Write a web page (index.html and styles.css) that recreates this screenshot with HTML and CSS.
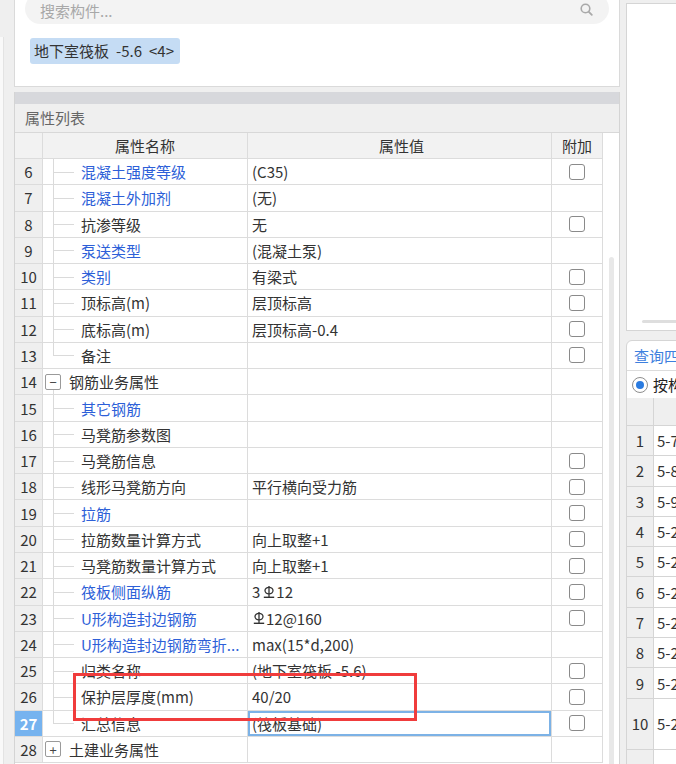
FILE: index.html
```html
<!DOCTYPE html>
<html lang="zh">
<head>
<meta charset="utf-8">
<title>属性列表</title>
<link rel="stylesheet" href="styles.css">
</head>
<body>
<div class="screen">
  <div class="edge"><div class="edge-line"></div></div>

  <div class="left">
    <div class="card">
      <div class="search">
        <span class="ph">搜索构件...</span>
        <svg class="sicon" width="13" height="13" viewBox="0 0 13 13"><circle cx="5.5" cy="5.5" r="4.3" fill="none" stroke="#a9a9a9" stroke-width="1.6"/><line x1="8.6" y1="8.6" x2="11.8" y2="11.8" stroke="#a9a9a9" stroke-width="1.8" stroke-linecap="round"/></svg>
      </div>
      <div class="tags"><span class="tag">地下室筏板<span class="sp"></span>-5.6<span class="sp"></span>&lt;4&gt;</span></div>
    </div>

    <div class="props">
      <div class="titlebar"></div>
      <div class="ptitle">属性列表</div>
      <div class="grid-wrap">
        <div class="table">
          <div class="row head">
            <div class="c num"></div>
            <div class="c name hc">属性名称</div>
            <div class="c val hc">属性值</div>
            <div class="c add hc">附加</div>
          </div>

          <div class="row"><div class="c num">6</div><div class="c name"><span class="tw"></span><span class="lbl link">混凝土强度等级</span></div><div class="c val">(C35)</div><div class="c add"><span class="cb"></span></div></div>
          <div class="row"><div class="c num">7</div><div class="c name"><span class="tw"></span><span class="lbl link">混凝土外加剂</span></div><div class="c val">(无)</div><div class="c add"></div></div>
          <div class="row"><div class="c num">8</div><div class="c name"><span class="tw"></span><span class="lbl">抗渗等级</span></div><div class="c val">无</div><div class="c add"><span class="cb"></span></div></div>
          <div class="row"><div class="c num">9</div><div class="c name"><span class="tw"></span><span class="lbl link">泵送类型</span></div><div class="c val">(混凝土泵)</div><div class="c add"></div></div>
          <div class="row"><div class="c num">10</div><div class="c name"><span class="tw"></span><span class="lbl link">类别</span></div><div class="c val">有梁式</div><div class="c add"><span class="cb"></span></div></div>
          <div class="row"><div class="c num">11</div><div class="c name"><span class="tw"></span><span class="lbl">顶标高(m)</span></div><div class="c val">层顶标高</div><div class="c add"><span class="cb"></span></div></div>
          <div class="row"><div class="c num">12</div><div class="c name"><span class="tw"></span><span class="lbl">底标高(m)</span></div><div class="c val">层顶标高-0.4</div><div class="c add"><span class="cb"></span></div></div>
          <div class="row"><div class="c num">13</div><div class="c name"><span class="tw last"></span><span class="lbl">备注</span></div><div class="c val"></div><div class="c add"><span class="cb"></span></div></div>
          <div class="row"><div class="c num">14</div><div class="c name grp open"><span class="box">−</span><span class="lbl">钢筋业务属性</span></div><div class="c val"></div><div class="c add"></div></div>
          <div class="row"><div class="c num">15</div><div class="c name"><span class="tw"></span><span class="lbl link">其它钢筋</span></div><div class="c val"></div><div class="c add"></div></div>
          <div class="row"><div class="c num">16</div><div class="c name"><span class="tw"></span><span class="lbl">马凳筋参数图</span></div><div class="c val"></div><div class="c add"></div></div>
          <div class="row"><div class="c num">17</div><div class="c name"><span class="tw"></span><span class="lbl">马凳筋信息</span></div><div class="c val"></div><div class="c add"><span class="cb"></span></div></div>
          <div class="row"><div class="c num">18</div><div class="c name"><span class="tw"></span><span class="lbl">线形马凳筋方向</span></div><div class="c val">平行横向受力筋</div><div class="c add"><span class="cb"></span></div></div>
          <div class="row"><div class="c num">19</div><div class="c name"><span class="tw"></span><span class="lbl link">拉筋</span></div><div class="c val"></div><div class="c add"><span class="cb"></span></div></div>
          <div class="row"><div class="c num">20</div><div class="c name"><span class="tw"></span><span class="lbl">拉筋数量计算方式</span></div><div class="c val">向上取整+1</div><div class="c add"><span class="cb"></span></div></div>
          <div class="row"><div class="c num">21</div><div class="c name"><span class="tw"></span><span class="lbl">马凳筋数量计算方式</span></div><div class="c val">向上取整+1</div><div class="c add"><span class="cb"></span></div></div>
          <div class="row"><div class="c num">22</div><div class="c name"><span class="tw"></span><span class="lbl link">筏板侧面纵筋</span></div><div class="c val">3<svg class="rb" width="12" height="14" viewBox="0 0 12 14"><line x1="6" y1="1" x2="6" y2="12" stroke="#333" stroke-width="1.3"/><ellipse cx="6" cy="5.6" rx="4" ry="3.3" fill="none" stroke="#333" stroke-width="1.3"/><line x1="0.8" y1="12.3" x2="11.2" y2="12.3" stroke="#333" stroke-width="1.4"/></svg>12</div><div class="c add"><span class="cb"></span></div></div>
          <div class="row"><div class="c num">23</div><div class="c name"><span class="tw"></span><span class="lbl link">U形构造封边钢筋</span></div><div class="c val"><svg class="rb first" width="12" height="14" viewBox="0 0 12 14"><line x1="6" y1="1" x2="6" y2="12" stroke="#333" stroke-width="1.3"/><ellipse cx="6" cy="5.6" rx="4" ry="3.3" fill="none" stroke="#333" stroke-width="1.3"/><line x1="0.8" y1="12.3" x2="11.2" y2="12.3" stroke="#333" stroke-width="1.4"/></svg>12@160</div><div class="c add"><span class="cb"></span></div></div>
          <div class="row"><div class="c num">24</div><div class="c name"><span class="tw"></span><span class="lbl link">U形构造封边钢筋弯折...</span></div><div class="c val">max(15*d,200)</div><div class="c add"></div></div>
          <div class="row"><div class="c num">25</div><div class="c name"><span class="tw"></span><span class="lbl">归类名称</span></div><div class="c val">(地下室筏板 -5.6)</div><div class="c add"><span class="cb"></span></div></div>
          <div class="row"><div class="c num">26</div><div class="c name"><span class="tw"></span><span class="lbl">保护层厚度(mm)</span></div><div class="c val">40/20</div><div class="c add"><span class="cb"></span></div></div>
          <div class="row sel"><div class="c num">27</div><div class="c name"><span class="tw last"></span><span class="lbl">汇总信息</span></div><div class="c val">(筏板基础)</div><div class="c add"><span class="cb"></span></div></div>
          <div class="row"><div class="c num">28</div><div class="c name grp"><span class="box">+</span><span class="lbl">土建业务属性</span></div><div class="c val"></div><div class="c add"></div></div>
        </div>
        <div class="vscroll"><div class="thumb"></div></div>
      </div>
    </div>
  </div>

  <div class="right">
    <div class="view">
      <div class="hthumb"></div>
    </div>
    <div class="query">
      <div class="tab">查询四则</div>
      <div class="radio-row"><span class="radio"></span><span class="rlbl">按构件</span></div>
      <div class="qtable">
        <div class="qrow qhead"><div class="qc qn"></div><div class="qc qv"></div></div>
        <div class="qrow"><div class="qc qn">1</div><div class="qc qv">5-7</div></div>
        <div class="qrow"><div class="qc qn">2</div><div class="qc qv">5-8</div></div>
        <div class="qrow"><div class="qc qn">3</div><div class="qc qv">5-9</div></div>
        <div class="qrow"><div class="qc qn">4</div><div class="qc qv">5-2</div></div>
        <div class="qrow"><div class="qc qn">5</div><div class="qc qv">5-2</div></div>
        <div class="qrow"><div class="qc qn">6</div><div class="qc qv">5-2</div></div>
        <div class="qrow"><div class="qc qn">7</div><div class="qc qv">5-2</div></div>
        <div class="qrow"><div class="qc qn">8</div><div class="qc qv">5-2</div></div>
        <div class="qrow"><div class="qc qn">9</div><div class="qc qv">5-2</div></div>
        <div class="qrow tall"><div class="qc qn">10</div><div class="qc qv">5-2</div></div>
        <div class="qrow"><div class="qc qn"></div><div class="qc qv"></div></div>
      </div>
    </div>
  </div>

  <div class="redbox"></div>
</div>
</body>
</html>
```

FILE: styles.css
```css
* { box-sizing: border-box; }
html, body { margin: 0; padding: 0; }
body {
  background: #efefef;
  font-family: "Noto Sans CJK SC", "Microsoft YaHei", sans-serif;
  font-size: 15px;
  color: #333;
}
.screen {
  position: relative;
  width: 676px;
  height: 764px;
  overflow: hidden;
  display: flex;
  background: #efefef;
}
.edge { width: 14px; flex-shrink: 0; }
.edge-line {
  margin-top: 37px;
  width: 4px;
  height: 740px;
  background: #f9f9f9;
  border-right: 1px solid #e3e3e3;
}

/* left column */
.left {
  width: 606px;
  flex-shrink: 0;
  display: flex;
  flex-direction: column;
}
.card {
  flex-shrink: 0;
  margin-top: -18px;
  height: 105px;
  background: #fff;
  border: 1px solid #dadada;
  padding: 10px;
}
.search {
  height: 31px;
  border-radius: 16px;
  background: #f3f3f3;
  display: flex;
  align-items: center;
  justify-content: space-between;
  padding: 0 16px 0 15px;
}
.ph { color: #a8a8a8; position: relative; top: 2px; }
.sicon { position: relative; top: 1px; }
.tags { margin-top: 14px; padding-left: 5px; display: flex; }
.tag {
  height: 26px;
  line-height: 26px;
  padding: 0 6px 0 4px;
  background: #c5dcf4;
  border-radius: 3px;
  color: #333;
  white-space: nowrap;
  display: flex;
  align-items: center;
}
.tag .sp { display: inline-block; width: 7px; }

.props {
  margin-top: 5px;
  flex: 1 0 auto;
  display: flex;
  flex-direction: column;
  border-left: 1px solid #d4d4d4;
  border-right: 1px solid #d4d4d4;
  background: #fff;
}
.titlebar { flex-shrink: 0; height: 12px; background: #d7d8dc; }
.ptitle {
  flex-shrink: 0;
  height: 29px;
  background: #efefef;
  border-bottom: 1px solid #d8d8d8;
  padding-left: 10px;
  line-height: 28px;
  color: #666;
}
.grid-wrap { display: flex; flex: 1 0 auto; }
.table { width: 588px; flex-shrink: 0; }
.vscroll { width: 16px; flex-shrink: 0; background: #fff; padding-top: 124px; padding-left: 6px; }
.thumb { width: 5px; height: 600px; background: #e8e8e8; border-radius: 3px; }

.row {
  display: grid;
  grid-template-columns: 28px 205px 304px 51px;
  height: 26.27px;
}
.row.head { height: 26px; }
.c {
  border-right: 1px solid #dcdcdc;
  border-bottom: 1px solid #dcdcdc;
  display: flex;
  align-items: center;
  white-space: nowrap;
  overflow: hidden;
  position: relative;
}
.head .c { background: #f2f2f2; justify-content: center; }
.num {
  background: #efefef;
  justify-content: center;
  color: #333;
  font-size: 15px;
}
.sel .num { background: #76b3ef; color: #fff; font-weight: bold; }
.sel .val { box-shadow: inset 0 0 0 2px #7cb2e6; }
.val { padding-left: 4px; }
.add { justify-content: center; }
.cb {
  width: 16px;
  height: 16px;
  border: 1px solid #8a8a8a;
  border-radius: 3px;
  background: #fff;
}
.tw {
  width: 38px;
  height: 100%;
  flex-shrink: 0;
  position: relative;
}
.tw::before {
  content: "";
  position: absolute;
  left: 10px;
  top: 0;
  bottom: 0;
  width: 1px;
  background: #dadada;
}
.tw.last::before { bottom: 50%; }
.tw::after {
  content: "";
  position: absolute;
  left: 10px;
  top: 50%;
  width: 21px;
  height: 1px;
  background: #dadada;
}
.lbl { overflow: hidden; text-overflow: clip; }
.link { color: #2d5fd8; }
.grp .box {
  margin-left: 2px;
  width: 16px;
  height: 16px;
  border: 1px solid #9a9a9a;
  border-radius: 2px;
  display: flex;
  align-items: center;
  justify-content: center;
  font-size: 13px;
  line-height: 1;
  color: #444;
  flex-shrink: 0;
  background: #fff;
  position: relative;
  z-index: 1;
}
.grp .lbl { margin-left: 8px; }
.grp.open::before {
  content: "";
  position: absolute;
  left: 10px;
  top: calc(50% + 8px);
  bottom: 0;
  width: 1px;
  background: #dadada;
}
.rb { margin: 0 1px 0 3px; position: relative; top: 0px; }
.rb.first { margin-left: 1px; }

/* right column */
.right {
  margin-left: 6px;
  width: 300px;
  flex-shrink: 0;
  display: flex;
  flex-direction: column;
}
.view {
  flex-shrink: 0;
  margin-top: 3px;
  height: 328px;
  background: #fff;
  border: 1px solid #d5d5d5;
  display: flex;
  flex-direction: column;
  justify-content: flex-end;
}
.hthumb {
  margin: 0 0 7px 15px;
  width: 120px;
  height: 3px;
  border-radius: 2px;
  background: #dedede;
}
.query {
  margin-top: 9px;
  flex: 1 0 auto;
  background: #fff;
  border: 1px solid #d5d5d5;
  border-top-left-radius: 6px;
}
.tab {
  height: 30px;
  border-bottom: 1px solid #dcdcdc;
  padding-left: 7px;
  line-height: 30px;
  color: #3d80de;
}
.radio-row {
  height: 27px;
  display: flex;
  align-items: center;
  padding-left: 5px;
}
.radio {
  width: 16px;
  height: 16px;
  border-radius: 50%;
  border: 1px solid #8e8e8e;
  display: flex;
  align-items: center;
  justify-content: center;
}
.radio::after {
  content: "";
  width: 8px;
  height: 8px;
  border-radius: 50%;
  background: #2b7be0;
}
.rlbl { margin-left: 5px; color: #222; }
.qrow {
  display: grid;
  grid-template-columns: 27px 1fr;
  height: 30.3px;
}
.qrow.qhead { height: 28px; }
.qrow.tall { height: 51px; }
.qc {
  border-right: 1px solid #d5d5d5;
  border-bottom: 1px solid #d5d5d5;
  display: flex;
  align-items: center;
  white-space: nowrap;
}
.qn { background: #efefef; justify-content: center; }
.qhead .qc { background: #efefef; }
.qv { padding-left: 3px; }

.redbox {
  position: absolute;
  left: 73px;
  top: 673px;
  width: 344px;
  height: 48px;
  border: 3px solid #f03c3c;
}
```
